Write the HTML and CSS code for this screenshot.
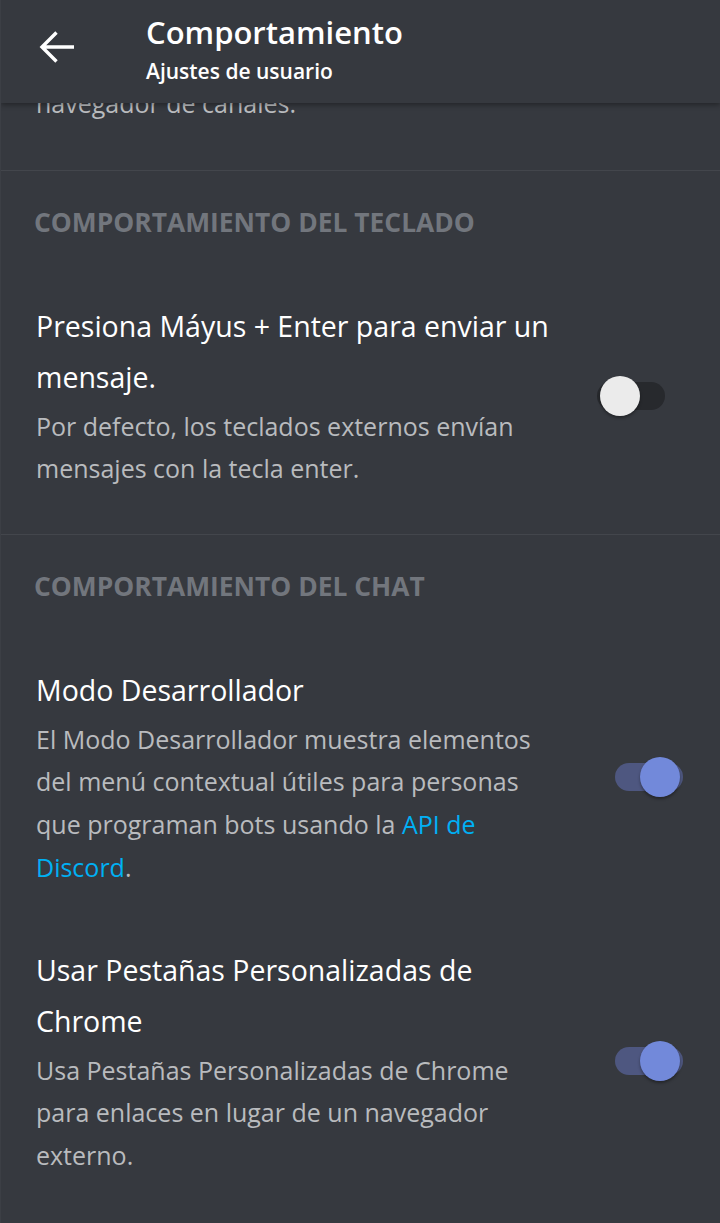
FILE: index.html
```html
<!DOCTYPE html>
<html lang="es">
<head>
<meta charset="utf-8">
<title>Comportamiento</title>
<link rel="stylesheet" href="styles.css">
</head>
<body>
<header class="appbar">
  <button class="back" aria-label="Atrás">
    <svg width="40" height="36" viewBox="0 0 40 36" aria-hidden="true">
      <path d="M37 18H5M19.5 3.5L5 18L19.5 32.5" fill="none" stroke="#ffffff" stroke-width="3.4" stroke-linecap="butt" stroke-linejoin="miter"/>
    </svg>
  </button>
  <div class="appbar-titles">
    <div class="appbar-title">Comportamiento</div>
    <div class="appbar-sub">Ajustes de usuario</div>
  </div>
</header>

<main class="content">
  <section class="section section-cut">
    <div class="row">
      <div class="row-text">
        <p class="desc">navegador de canales.</p>
      </div>
    </div>
  </section>

  <section class="section">
    <h2 class="section-title">Comportamiento del teclado</h2>
    <div class="row">
      <div class="row-text">
        <div class="label">Presiona Máyus + Enter para enviar un mensaje.</div>
        <p class="desc">Por defecto, los teclados externos envían mensajes con la tecla enter.</p>
      </div>
      <span class="switch switch-off"><span class="track"></span><span class="knob"></span></span>
    </div>
  </section>

  <section class="section">
    <h2 class="section-title">Comportamiento del chat</h2>
    <div class="row">
      <div class="row-text">
        <div class="label">Modo Desarrollador</div>
        <p class="desc">El Modo Desarrollador muestra elementos del menú contextual útiles para personas que programan bots usando la <a class="link" href="#">API de Discord</a>.</p>
      </div>
      <span class="switch switch-on"><span class="track"></span><span class="knob"></span></span>
    </div>
    <div class="row">
      <div class="row-text">
        <div class="label">Usar Pestañas Personalizadas de Chrome</div>
        <p class="desc">Usa Pestañas Personalizadas de Chrome para enlaces en lugar de un navegador externo.</p>
      </div>
      <span class="switch switch-on"><span class="track"></span><span class="knob"></span></span>
    </div>
  </section>
</main>
</body>
</html>
```

FILE: styles.css
```css
* { box-sizing: border-box; }

html, body {
  margin: 0;
  padding: 0;
  background: #36393f;
}

body {
  font-family: "Open Sans", "Noto Sans", sans-serif;
  color: #ffffff;
  width: 720px;
  height: 1223px;
  overflow: hidden;
  position: relative;
  border-left: 1px solid #3c3f45;
}

.appbar {
  position: absolute;
  top: 0;
  left: 0;
  right: 0;
  height: 103px;
  background: #36393f;
  box-shadow: 0 2px 5px rgba(0, 0, 0, 0.35);
  z-index: 2;
  display: flex;
  align-items: flex-start;
}

.back {
  background: none;
  border: 0;
  padding: 0;
  margin: 29px 0 0 36px;
  width: 40px;
  height: 36px;
  display: block;
}

.back svg { display: block; }

.appbar-titles {
  margin-left: 69px;
  padding-top: 14px;
}

.appbar-title {
  font-size: 31px;
  line-height: 36px;
  font-weight: 600;
  color: #ffffff;
}

.appbar-sub {
  margin-top: 7px;
  font-size: 21px;
  line-height: 28px;
  font-weight: 600;
  color: #ffffff;
}

.content {
  display: flex;
  flex-direction: column;
}

.section {
  border-top: 1px solid #43464c;
  padding: 35px 0 15px;
}

.section-cut {
  border-top: 0;
  padding: 53px 0 17px;
}

.section-title {
  margin: 0 0 35px 33px;
  font-size: 26.4px;
  line-height: 32px;
  font-weight: 700;
  text-transform: uppercase;
  color: #72767d;
}

.row {
  display: flex;
  align-items: center;
  padding: 28.5px 37px 28.5px 35px;
}

.row-text {
  flex: 1;
  margin-right: 42px;
  min-width: 0;
}

.label {
  font-size: 28.5px;
  line-height: 51px;
  color: #ffffff;
}

.desc {
  margin: 1.5px 0 0;
  font-size: 25px;
  line-height: 42.67px;
  color: #b9bbbe;
}

.section-cut .desc { margin-top: 0; }

.link {
  color: #00b0f4;
  text-decoration: none;
}

.switch {
  position: relative;
  flex: 0 0 83px;
  width: 83px;
  height: 40px;
}

.track {
  position: absolute;
  top: 6px;
  width: 68px;
  height: 28px;
  border-radius: 14px;
}

.knob {
  position: absolute;
  top: 0;
  width: 40px;
  height: 40px;
  border-radius: 50%;
  box-shadow: 0 2px 3px rgba(0, 0, 0, 0.35);
}

.switch-off .track { left: -3px; background: #27292d; }
.switch-off .knob { left: 0; background: #ebebeb; }

.switch-on .track { left: 15px; background: #4e5780; }
.switch-on .knob { left: 40px; background: #7289da; }
```
